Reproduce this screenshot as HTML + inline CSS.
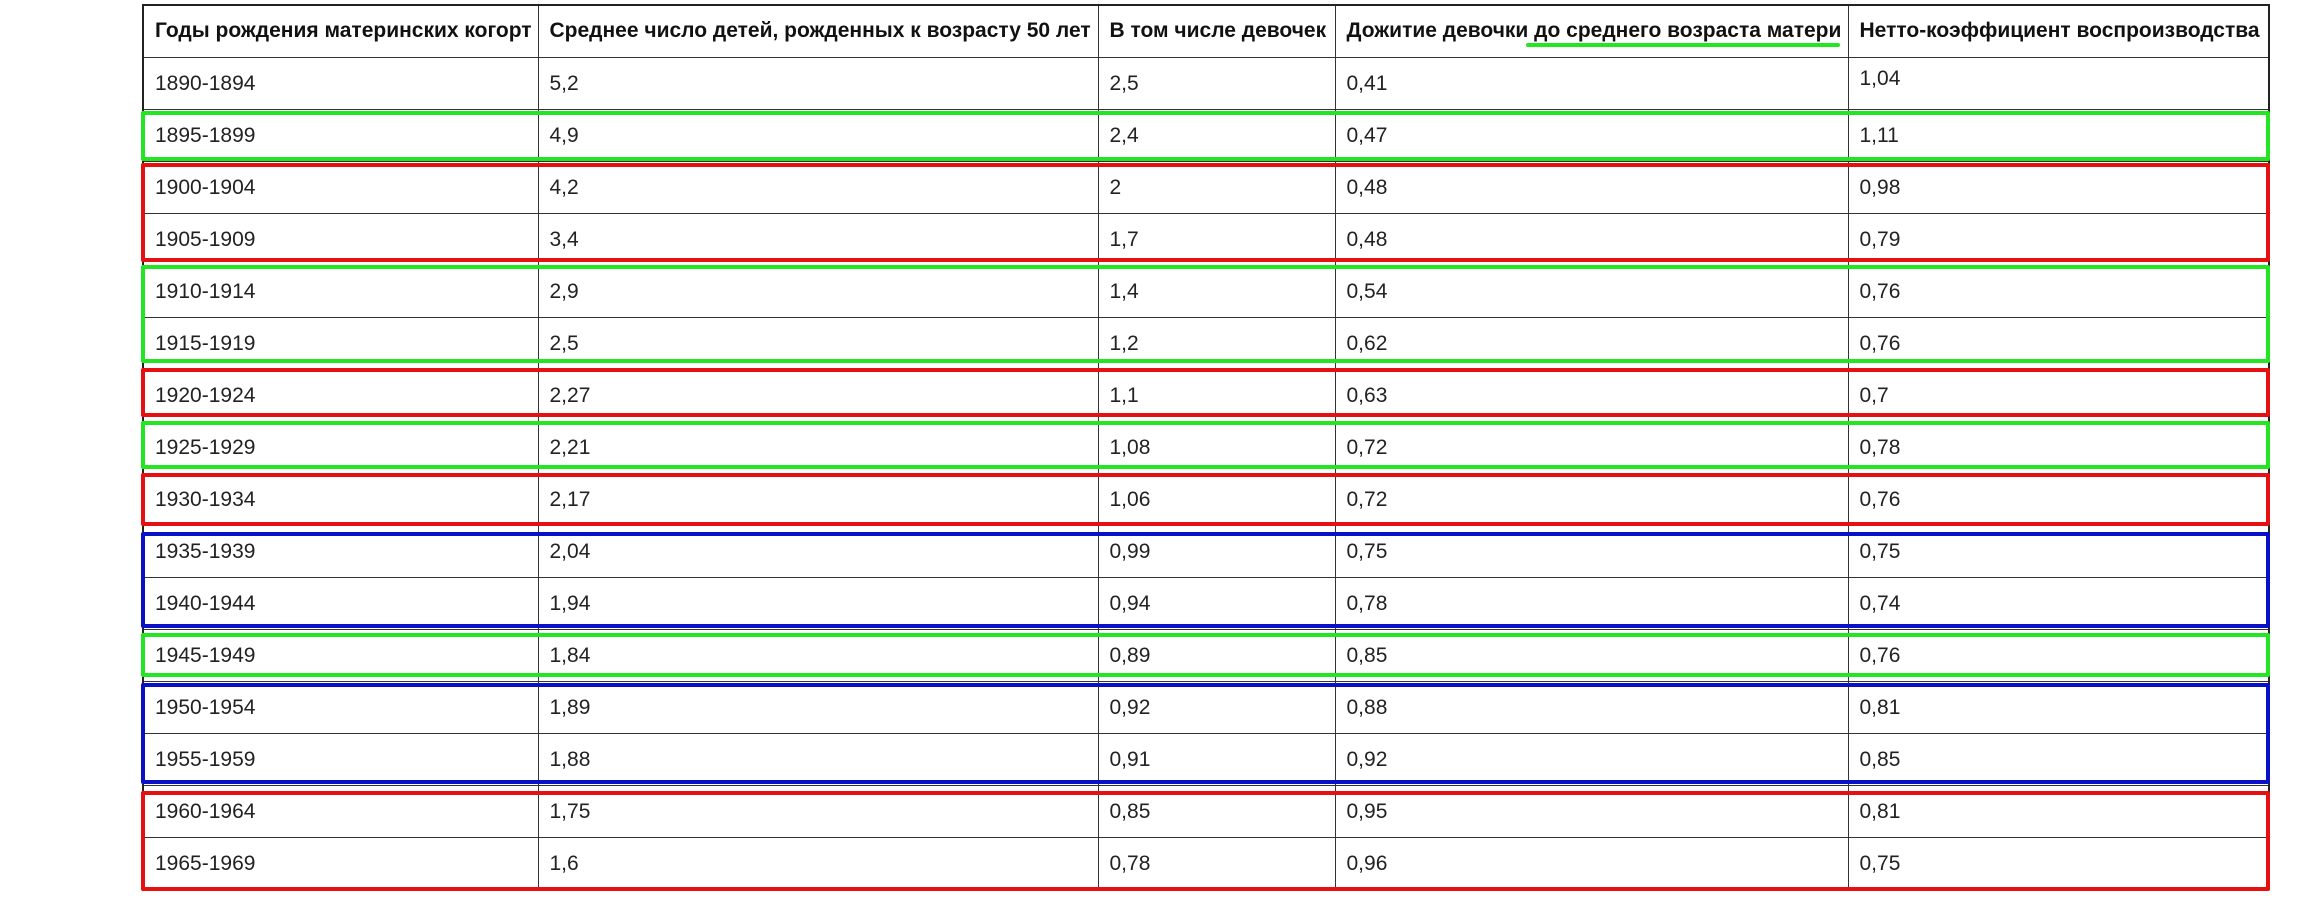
<!DOCTYPE html>
<html><head><meta charset="utf-8"><style>
html,body{margin:0;padding:0;background:#fff;width:2319px;height:907px;overflow:hidden;position:relative}
table{position:absolute;left:142px;top:4px;border-collapse:collapse;table-layout:fixed;width:2126px;font-family:"Liberation Sans",Arial,sans-serif;font-size:21px;color:#222;border:2px solid #222}
td,th{border:1px solid #333;height:52px;padding:2px 0 0 11px;text-align:left;white-space:nowrap;box-sizing:border-box;vertical-align:middle}
th{font-weight:bold;color:#111;padding-top:0}
.b{position:absolute;border:4px solid;box-sizing:border-box;left:141px;width:2129px;border-radius:2px}
.g{border-color:#22e622}.r{border-color:#e61010}.bl{border-color:#0a10c8}
</style></head><body>
<table>
<colgroup><col style="width:395px"><col style="width:560px"><col style="width:237px"><col style="width:513px"><col style="width:421px"></colgroup>
<tr><th>Годы рождения материнских когорт</th><th>Среднее число детей, рожденных к возрасту 50 лет</th><th>В том числе девочек</th><th>Дожитие девочки до среднего возраста матери</th><th>Нетто-коэффициент воспроизводства</th></tr>
<tr><td>1890-1894</td><td>5,2</td><td>2,5</td><td>0,41</td><td style="vertical-align:top;padding-top:9px">1,04</td></tr>
<tr><td>1895-1899</td><td>4,9</td><td>2,4</td><td>0,47</td><td>1,11</td></tr>
<tr><td>1900-1904</td><td>4,2</td><td>2</td><td>0,48</td><td>0,98</td></tr>
<tr><td>1905-1909</td><td>3,4</td><td>1,7</td><td>0,48</td><td>0,79</td></tr>
<tr><td>1910-1914</td><td>2,9</td><td>1,4</td><td>0,54</td><td>0,76</td></tr>
<tr><td>1915-1919</td><td>2,5</td><td>1,2</td><td>0,62</td><td>0,76</td></tr>
<tr><td>1920-1924</td><td>2,27</td><td>1,1</td><td>0,63</td><td>0,7</td></tr>
<tr><td>1925-1929</td><td>2,21</td><td>1,08</td><td>0,72</td><td>0,78</td></tr>
<tr><td>1930-1934</td><td>2,17</td><td>1,06</td><td>0,72</td><td>0,76</td></tr>
<tr><td>1935-1939</td><td>2,04</td><td>0,99</td><td>0,75</td><td>0,75</td></tr>
<tr><td>1940-1944</td><td>1,94</td><td>0,94</td><td>0,78</td><td>0,74</td></tr>
<tr><td>1945-1949</td><td>1,84</td><td>0,89</td><td>0,85</td><td>0,76</td></tr>
<tr><td>1950-1954</td><td>1,89</td><td>0,92</td><td>0,88</td><td>0,81</td></tr>
<tr><td>1955-1959</td><td>1,88</td><td>0,91</td><td>0,92</td><td>0,85</td></tr>
<tr><td>1960-1964</td><td>1,75</td><td>0,85</td><td>0,95</td><td>0,81</td></tr>
<tr><td>1965-1969</td><td>1,6</td><td>0,78</td><td>0,96</td><td>0,75</td></tr>
</table>
<div style="position:absolute;left:1526px;top:43px;width:314px;height:4px;background:#22e622;border-radius:2px"></div>
<div class="b g" style="top:111px;height:50px"></div>
<div class="b r" style="top:163px;height:99px"></div>
<div class="b g" style="top:265px;height:98px"></div>
<div class="b r" style="top:368px;height:49px"></div>
<div class="b g" style="top:421px;height:48px"></div>
<div class="b r" style="top:473px;height:53px"></div>
<div class="b bl" style="top:532px;height:96px"></div>
<div class="b g" style="top:633px;height:44px"></div>
<div class="b bl" style="top:683px;height:101px"></div>
<div class="b r" style="top:791px;height:100px"></div>
</body></html>
